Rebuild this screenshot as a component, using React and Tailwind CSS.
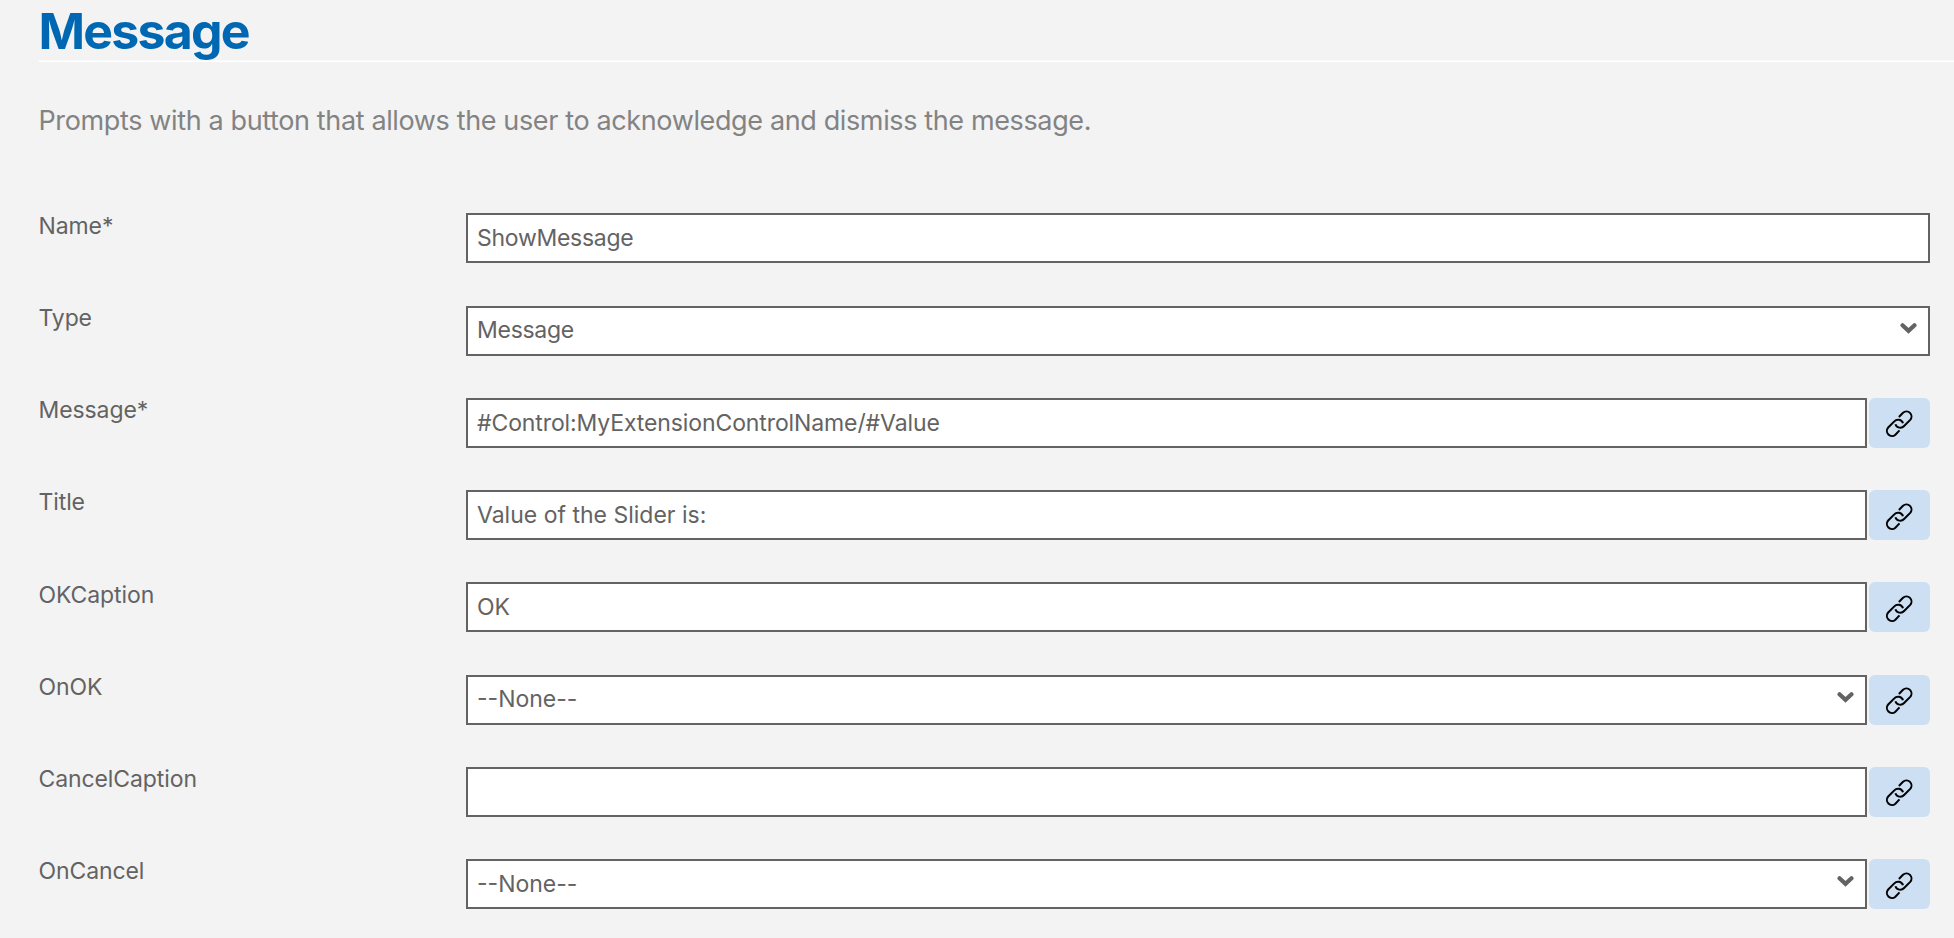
const fields = [
  { label: "Name*", value: "ShowMessage", tracking: "tracking-[-0.28px]" },
  { label: "Type", value: "Message", select: true, tracking: "tracking-[-0.28px]" },
  { label: "Message*", value: "#Control:MyExtensionControlName/#Value", link: true, tracking: "tracking-[-0.11px]" },
  { label: "Title", value: "Value of the Slider is:", link: true },
  { label: "OKCaption", value: "OK", link: true },
  { label: "OnOK", value: "--None--", select: true, link: true },
  { label: "CancelCaption", value: "", link: true },
  { label: "OnCancel", value: "--None--", select: true, link: true },
];

function LinkIcon() {
  return (
    <svg className="mt-[2px] h-[29px] w-[29px]" viewBox="0 0 29 29" fill="none" stroke="#000" strokeWidth="2">
      <path d="M13.9 8 L18 3.7 A5.1 5.1 0 0 1 25.2 10.9 L19.1 17 A5.1 5.1 0 0 1 10.4 15.2" />
      <path d="M14.5 21.4 L10.4 25.7 A5.1 5.1 0 0 1 3.2 18.5 L9.3 12.4 A5.1 5.1 0 0 1 18 14.2" />
    </svg>
  );
}

function Chevron() {
  return (
    <svg
      className="mb-[5px] h-[11px] w-[17px]"
      viewBox="0 0 17 11"
      fill="none"
      stroke="#636363"
      strokeWidth="4.2"
      strokeLinecap="round"
    >
      <path d="M2.5 2.3 L8.5 7.8 L14.5 2.3" />
    </svg>
  );
}

function Field({ label, value, select, link, tracking = "" }) {
  return (
    <div className="flex h-[92.25px] items-start">
      <div className="w-[427.5px] shrink-0 pt-[0.3px] text-[23px] leading-[25px] tracking-[-0.1px]">{label}</div>
      <div className="flex min-w-0 flex-1 gap-[2px]">
        <div className="flex h-[50px] min-w-0 flex-1 items-center justify-between border-2 border-[#636363] bg-white pr-[11px] pl-[9px] text-[23px]">
          <span className={`whitespace-nowrap ${tracking}`}>{value}</span>
          {select && <Chevron />}
        </div>
        {link && (
          <button className="flex h-[50px] w-[61.5px] items-center justify-center rounded-md bg-[#cddff3]">
            <LinkIcon />
          </button>
        )}
      </div>
    </div>
  );
}

export default function App() {
  return (
    <main className="h-[938px] overflow-hidden bg-[#f3f3f3] pl-[38.5px] font-['Inter',sans-serif] text-[#636363]">
      <h1 className="h-[62.4px] border-b border-white text-[50px] leading-[62px] font-bold tracking-[-1.8px] text-[#0068b3] shadow-[0_-1px_0_#fafafa_inset]">
        Message
      </h1>
      <p className="mt-[41.6px] h-[34px] text-[27px] leading-[34px] tracking-[-0.37px] whitespace-nowrap text-[#838383]">
        Prompts with a button that allows the user to acknowledge and dismiss the message.
      </p>
      <div className="mt-[75.4px] pr-6">
        {fields.map((field) => (
          <Field key={field.label} {...field} />
        ))}
      </div>
    </main>
  );
}
